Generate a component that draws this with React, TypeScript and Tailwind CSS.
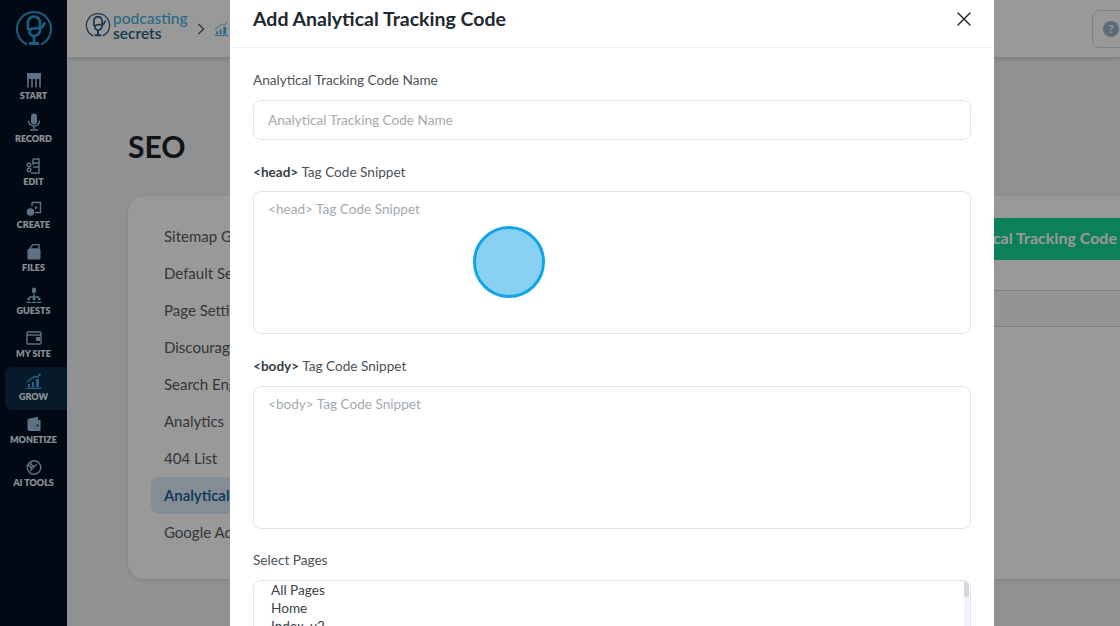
import { X } from 'lucide-react';
import type { ReactNode } from 'react';

const ic = { fill: 'none', stroke: 'currentColor', strokeWidth: 1.4 };

const NAV_ITEMS: { label: string; active?: boolean; icon: ReactNode }[] = [
  {
    label: 'START',
    icon: (
      <svg viewBox="0 0 16 16" className="h-4 w-4">
        <path d="M1 1h14v6H1z" fill="currentColor" />
        <path d="M2 7v8.500M14 7v8.500M6 7v8.500M10 7v8.500" {...ic} strokeWidth={1.6} />
      </svg>
    ),
  },
  {
    label: 'RECORD',
    icon: (
      <svg viewBox="0 0 16 18" className="h-[18px] w-4">
        <rect x="5" y="0.500" width="6" height="11" rx="3" fill="currentColor" />
        <path d="M2.500 7.500a5.500 5.500 0 0 0 11 0M8 13v3M4 17h8" {...ic} />
      </svg>
    ),
  },
  {
    label: 'EDIT',
    icon: (
      <svg viewBox="0 0 16 16" className="h-4 w-4">
        <path d="M7 1h6v14H5M7 1v6M7 5h6M7 9h6" {...ic} />
        <circle cx="3" cy="7" r="1.800" {...ic} />
        <circle cx="3" cy="12" r="1.800" {...ic} />
      </svg>
    ),
  },
  {
    label: 'CREATE',
    icon: (
      <svg viewBox="0 0 16 16" className="h-4 w-4">
        <path d="M6 1.500h8.500v10H9M6 1.500v4" {...ic} />
        <path d="M9 5l3 1.800L9 8.500z" fill="currentColor" />
        <circle cx="4.500" cy="11" r="3.800" fill="currentColor" />
      </svg>
    ),
  },
  {
    label: 'FILES',
    icon: (
      <svg viewBox="0 0 16 16" className="h-4 w-4">
        <path d="M4 4l3-3.500h6V5H4z" {...ic} />
        <rect x="1.500" y="5" width="13" height="10.500" rx="1" fill="currentColor" />
      </svg>
    ),
  },
  {
    label: 'GUESTS',
    icon: (
      <svg viewBox="0 0 16 16" className="h-4 w-4">
        <rect x="6" y="0.500" width="4" height="6" rx="2" fill="currentColor" />
        <path d="M8 7v3M3 10h10" {...ic} />
        <circle cx="2.800" cy="12" r="1.400" fill="currentColor" />
        <circle cx="8" cy="12" r="1.400" fill="currentColor" />
        <circle cx="13.200" cy="12" r="1.400" fill="currentColor" />
        <path d="M0.500 15.500h4.500M5.800 15.500h4.500M11 15.500h4.500" {...ic} />
      </svg>
    ),
  },
  {
    label: 'MY SITE',
    icon: (
      <svg viewBox="0 0 16 16" className="h-4 w-4">
        <rect x="1" y="2" width="14" height="12" rx="1" {...ic} />
        <path d="M1 5h14" {...ic} />
        <path d="M10 7h4v4h-4z" fill="currentColor" />
      </svg>
    ),
  },
  {
    label: 'GROW',
    active: true,
    icon: (
      <svg viewBox="0 0 16 16" className="h-4 w-4 text-[#3ea4dc]">
        <path d="M1 9l8-6 2 1.500L14 1" {...ic} />
        <path d="M14.500 0.500v3l-3-2z" fill="currentColor" />
        <path d="M2 11h2v3H2zM6 9h2v5H6zM10 6h3v8h-3z" fill="currentColor" />
        <path d="M0.500 15.300h15" {...ic} />
      </svg>
    ),
  },
  {
    label: 'MONETIZE',
    icon: (
      <svg viewBox="0 0 16 16" className="h-4 w-4">
        <path d="M1.500 3L12 0.800V4h2.500v11h-11a2 2 0 0 1-2-2z" fill="currentColor" />
        <circle cx="11.500" cy="9.500" r="1" fill="#020a14" />
      </svg>
    ),
  },
  {
    label: 'AI TOOLS',
    icon: (
      <svg viewBox="0 0 16 16" className="h-4 w-4">
        <circle cx="8" cy="8.500" r="6.800" {...ic} />
        <path d="M4 12l7-7M5 4l.8 2 2 .8-2 .8L5 9.600l-.8-2-2-.8 2-.8z" {...ic} strokeWidth={1.1} />
      </svg>
    ),
  },
];

const MENU = ['Sitemap Generator', 'Default Settings', 'Page Settings', 'Discourage Search', 'Search Engines', 'Analytics', '404 List', 'Analytical Tracking', 'Google Ads'];

function MicLogo({ className }: { className: string }) {
  return (
    <svg viewBox="0 0 38 38" className={className} fill="none" stroke="currentColor">
      <path d="M12 33.500A17 17 0 1 1 26 33.500" strokeWidth="2" />
      <path d="M13 19V11.500a6 6 0 0 1 12 0V19a6 6 0 0 1-8 5.500c-4-2-3-7 1-7l9-1 3-5" strokeWidth="2.600" />
      <path d="M19 25v6M14 32.500h10" strokeWidth="2.800" />
    </svg>
  );
}

function Sidebar() {
  return (
    <aside className="flex h-full w-[67px] shrink-0 flex-col items-end bg-[#031122] text-[#9dbfdc]">
      <div className="flex h-[57px] w-full items-center justify-center pt-0.5 text-[#2b9fd8]">
        <MicLogo className="h-[38px] w-[38px]" />
      </div>
      <nav className="mt-[9px] flex w-[62px] flex-col">
        {NAV_ITEMS.map((item) => (
          <div
            key={item.label}
            className={`flex h-[43px] w-[62px] flex-col items-center justify-end pb-[8px] pr-[5px] ${item.active ? 'rounded-l-lg bg-[#0a2c47]' : ''}`}
          >
            {item.icon}
            <span className="mt-[2px] text-[9px] font-extrabold leading-[11px] text-[#e6eef5]">{item.label}</span>
          </div>
        ))}
      </nav>
    </aside>
  );
}

function Background() {
  return (
    <div className="flex h-full w-[1120px]">
      <Sidebar />
      <div className="flex min-w-0 flex-1 flex-col bg-[#eef2f4]">
        <header className="flex h-[57px] shrink-0 items-center justify-between bg-white pl-[18px] shadow-[0_2px_4px_rgba(0,0,0,0.12)]">
          <div className="flex items-center">
            <MicLogo className="-mt-[5px] h-[26px] w-[26px] text-[#2a5f86]" />
            <div className="-mt-[5px] ml-0.5 flex flex-col text-[15.500px] font-medium leading-[15px]">
              <span className="text-[#48b0df]">podcasting</span>
              <span className="font-semibold text-[#2a5f86]">secrets</span>
            </div>
            <svg viewBox="0 0 8 12" className="ml-[9px] h-3 w-2 text-[#555]" fill="none" stroke="currentColor" strokeWidth="1.300">
              <path d="M1.500 1l5 5-5 5" />
            </svg>
            <svg viewBox="0 0 16 16" className="ml-[9px] h-[15px] w-[15px] text-[#48b0df]">
              <path d="M1 9l8-6 2 1.500L14 1" fill="none" stroke="currentColor" />
              <path d="M2 11h2v3H2zM6 9h2v5H6zM10 6h3v8h-3z" fill="currentColor" />
              <path d="M0.500 15.300h15" stroke="currentColor" />
            </svg>
          </div>
          <div className="-mr-4 flex h-[38px] w-11 items-center rounded-l-lg border border-[#d5d8db] pl-[10px]">
            <span className="flex h-4 w-4 items-center justify-center rounded-full bg-[#9ab5cc] text-[12px] font-bold text-white">?</span>
          </div>
        </header>
        <div className="pl-[61px]">
          <h1 className="mt-[69px] text-[30px] font-bold leading-[40px] text-[#1c2126]">SEO</h1>
          <div className="mt-[30px] flex h-[383px] w-[1000px] rounded-l-2xl bg-white shadow-[0_1px_4px_rgba(0,0,0,0.1)]">
            <ul className="w-[200px] shrink-0 px-[36px] pt-[22px] text-[15px] text-[#555d64]">
              {MENU.map((m) => (
                <li
                  key={m}
                  className={`-mx-[13px] flex h-[37px] items-center whitespace-nowrap rounded-lg px-[13px] ${m.startsWith('Analytical') ? 'bg-[#dcecf8] font-semibold text-[#0f5a96]' : ''}`}
                >
                  {m}
                </li>
              ))}
            </ul>
            <div className="flex flex-1 flex-col items-end pr-[8px] pt-[22px]">
              <button className="flex h-[42px] w-[340px] items-center justify-end whitespace-nowrap bg-[#15d596] pb-[2px] pr-[3px] text-[16px] font-bold text-white">
                Add Analytical Tracking Code
              </button>
              <div className="mt-[30px] h-[37px] w-[340px] border-y border-[#d0d3d6] bg-[#f6f7f8]" />
            </div>
          </div>
        </div>
      </div>
    </div>
  );
}

const fieldClass = 'block w-full rounded-lg border border-[#e2e5e8] bg-white px-[14px] text-[13.600px] text-[#3b4248] outline-none placeholder:text-[#a3a9ae]';

function Modal() {
  return (
    <div className="absolute bottom-0 left-[230px] top-0 w-[764px] overflow-hidden bg-white text-[13.600px] text-[#4a5158]">
      <div className="flex h-[48px] items-center justify-between border-b border-[#f1f2f4] pb-[10px] pl-[23px] pr-[18px]">
        <h2 className="text-[19.500px] font-bold text-[#22282e]">Add Analytical Tracking Code</h2>
        <X size={24} strokeWidth={1.4} className="text-[#22282e]" />
      </div>
      <div className="px-[23px] pt-[23px]">
        <label className="block leading-[18px]">Analytical Tracking Code Name</label>
        <input placeholder="Analytical Tracking Code Name" className={`${fieldClass} mt-[11px] h-10`} />
        <label className="mt-[23px] block leading-[18px]"><b className="font-bold text-[#363d44]">&lt;head&gt;</b> Tag Code Snippet</label>
        <textarea placeholder="<head> Tag Code Snippet" className={`${fieldClass} mt-[10px] h-[143px] resize-none py-[7px]`} />
        <label className="mt-[23px] block leading-[18px]"><b className="font-bold text-[#363d44]">&lt;body&gt;</b> Tag Code Snippet</label>
        <textarea placeholder="<body> Tag Code Snippet" className={`${fieldClass} mt-[11px] h-[143px] resize-none py-[7px]`} />
        <label className="mt-[22px] block leading-[18px]">Select Pages</label>
        <div className="mt-[11px] flex h-[80px] overflow-hidden rounded-lg border border-[#e2e5e8] pl-[17px] pr-[1px] leading-[18px] text-[#3b4248]">
          <div className="flex-1">
            <div>All Pages</div>
            <div>Home</div>
            <div>Index_v2</div>
          </div>
          <div className="w-[5px] bg-[#eef0fb]">
            <div className="h-4 rounded-sm bg-[#d5d7e0]" />
          </div>
        </div>
      </div>
    </div>
  );
}

export default function App() {
  return (
    <div className="relative h-[626px] w-[1120px] overflow-hidden font-['Lato',sans-serif]">
      <Background />
      <div className="absolute inset-0 bg-black/40" />
      <Modal />
      {/* click marker from the walkthrough recording */}
      <div className="absolute left-[473px] top-[226px] h-[72px] w-[72px] rounded-full border-[3px] border-[#12a5e6] bg-[#88d1f3]" />
    </div>
  );
}
